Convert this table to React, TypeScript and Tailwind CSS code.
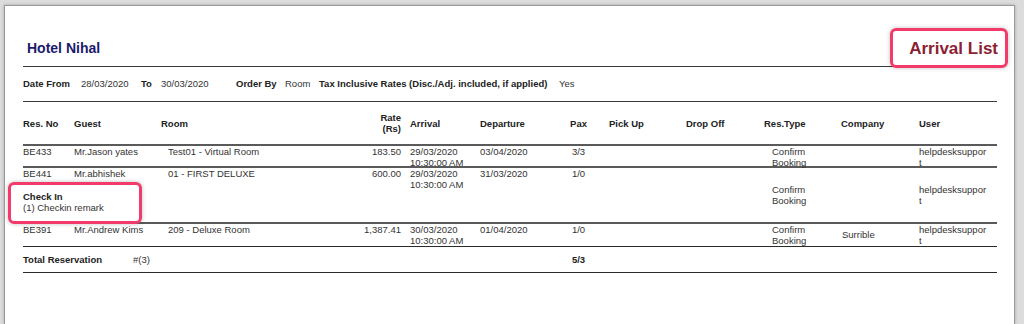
import React from 'react';

interface Row {
  resNo: string;
  guest: string;
  room: string;
  rate: string;
  arrival: string;
  departure: string;
  pax: string;
  company: string;
  remark?: string;
}

const ROWS: Row[] = [
  { resNo: 'BE433', guest: 'Mr.Jason yates', room: 'Test01 - Virtual Room', rate: '183.50', arrival: '29/03/2020', departure: '03/04/2020', pax: '3/3', company: '' },
  { resNo: 'BE441', guest: 'Mr.abhishek', room: '01 - FIRST DELUXE', rate: '600.00', arrival: '29/03/2020', departure: '31/03/2020', pax: '1/0', company: '', remark: '(1) Checkin remark' },
  { resNo: 'BE391', guest: 'Mr.Andrew Kims', room: '209 - Deluxe Room', rate: '1,387.41', arrival: '30/03/2020', departure: '01/04/2020', pax: '1/0', company: 'Surrible' },
];

// left block columns: Res.No .. Drop Off ; right block: Res.Type, Company, User
const LEFT_COLS = 'grid grid-cols-[51px_87px_179px_70px_70px_80px_37px_89px_78px]';

const LeftCells: React.FC<{ row: Row }> = ({ row }) => (
  <div className={`${LEFT_COLS} items-start`}>
    <div>{row.resNo}</div>
    <div>{row.guest}</div>
    <div className="pl-[7px]">{row.room}</div>
    <div className="text-right pr-[9px]">{row.rate}</div>
    <div>
      <div>{row.arrival}</div>
      <div>10:30:00 AM</div>
    </div>
    <div>{row.departure}</div>
    <div className="text-center">{row.pax}</div>
    <div></div>
    <div></div>
  </div>
);

const RightCells: React.FC<{ row: Row }> = ({ row }) => (
  <div className="grid grid-cols-[77px_78px_77px] items-center self-stretch">
    <div className="pl-[8px]">
      <div>Confirm</div>
      <div>Booking</div>
    </div>
    <div className="pl-[1px]">{row.company}</div>
    <div className="w-[68px] break-all">helpdesksupport</div>
  </div>
);

export default function App() {
  return (
    <div className="w-[1024px] h-[324px] overflow-hidden bg-[#dcdcdc] pt-[5px] pl-[4px] pr-[9px] font-['Liberation_Sans',Arial,sans-serif]">
      <div className="relative h-full bg-white border-l border-t border-r border-[#9a9a9a] shadow-[0_0_3px_rgba(0,0,0,0.25)] pl-[18px] pr-[17px]">
        {/* title */}
        <div className="h-[61px] flex items-end justify-between pb-[10px] border-b border-[#3a3a3a]">
          <div className="pl-[4px] text-[14px] leading-[16px] font-bold text-[#1b1b6b]">Hotel Nihal</div>
          <div className="text-[17px] leading-[20px] font-bold text-[#8c1f33] mb-[-3px] mr-[-1px]">Arrival List</div>
        </div>

        {/* filters */}
        <div className="h-[35px] flex items-center text-[9.5px] text-[#333] border-b border-[#3a3a3a] whitespace-nowrap">
          <span className="w-[58px] font-bold text-[#222]">Date From</span>
          <span className="w-[60px]">28/03/2020</span>
          <span className="w-[20px] font-bold text-[#222]">To</span>
          <span className="w-[75px]">30/03/2020</span>
          <span className="w-[49px] font-bold text-[#222]">Order By</span>
          <span className="w-[34px]">Room</span>
          <span className="w-[240px] font-bold text-[#222]">Tax Inclusive Rates (Disc./Adj. included, if applied)</span>
          <span>Yes</span>
        </div>

        {/* header */}
        <div className="h-[44px] flex items-center text-[9.5px] leading-[11px] font-bold text-[#222] border-b-2 border-[#5a5a5a]">
          <div className={`${LEFT_COLS} items-center`}>
            <div>Res. No</div>
            <div>Guest</div>
            <div>Room</div>
            <div className="text-right pr-[9px]">
              <div>Rate</div>
              <div>(Rs)</div>
            </div>
            <div>Arrival</div>
            <div>Departure</div>
            <div className="text-center">Pax</div>
            <div className="pl-[12px]">Pick Up</div>
            <div>Drop Off</div>
          </div>
          <div className="grid grid-cols-[77px_78px_77px]">
            <div>Res.Type</div>
            <div>Company</div>
            <div>User</div>
          </div>
        </div>

        {/* rows */}
        <div className="text-[9.5px] leading-[10.5px] text-[#333]">
          {ROWS.map((row, i) => (
            <div
              key={row.resNo}
              className={`flex pt-[1px] ${i === 1 ? 'h-[56px]' : 'h-[22px]'} ${i === ROWS.length - 1 ? 'h-[23px] border-b border-[#2a2a2a]' : 'border-b-2 border-[#5a5a5a]'}`}
            >
              <div className="flex flex-col">
                <LeftCells row={row} />
                {row.remark && (
                  <div className="mt-[1px] leading-[11px]">
                    <div className="font-bold text-[#222]">Check In</div>
                    <div>{row.remark}</div>
                  </div>
                )}
              </div>
              <RightCells row={row} />
            </div>
          ))}
        </div>

        {/* total */}
        <div className="grid grid-cols-[110px_427px_37px] h-[26px] items-center pt-[1px] text-[9.5px] text-[#333] border-b border-[#2a2a2a]">
          <div className="font-bold text-[#222]">Total Reservation</div>
          <div>#(3)</div>
          <div className="text-center font-bold text-[#222]">5/3</div>
        </div>

        {/* highlight annotations */}
        <div className="absolute left-[885px] top-[22px] w-[118px] h-[40px] border-[3px] border-[#f23a6b] rounded-[6px] shadow-[0_0_4px_rgba(0,0,0,0.25)]" />
        <div className="absolute left-[3px] top-[176px] w-[134px] h-[42px] border-[3px] border-[#f23a6b] rounded-[6px] shadow-[0_0_4px_rgba(0,0,0,0.25)]" />
      </div>
    </div>
  );
}
